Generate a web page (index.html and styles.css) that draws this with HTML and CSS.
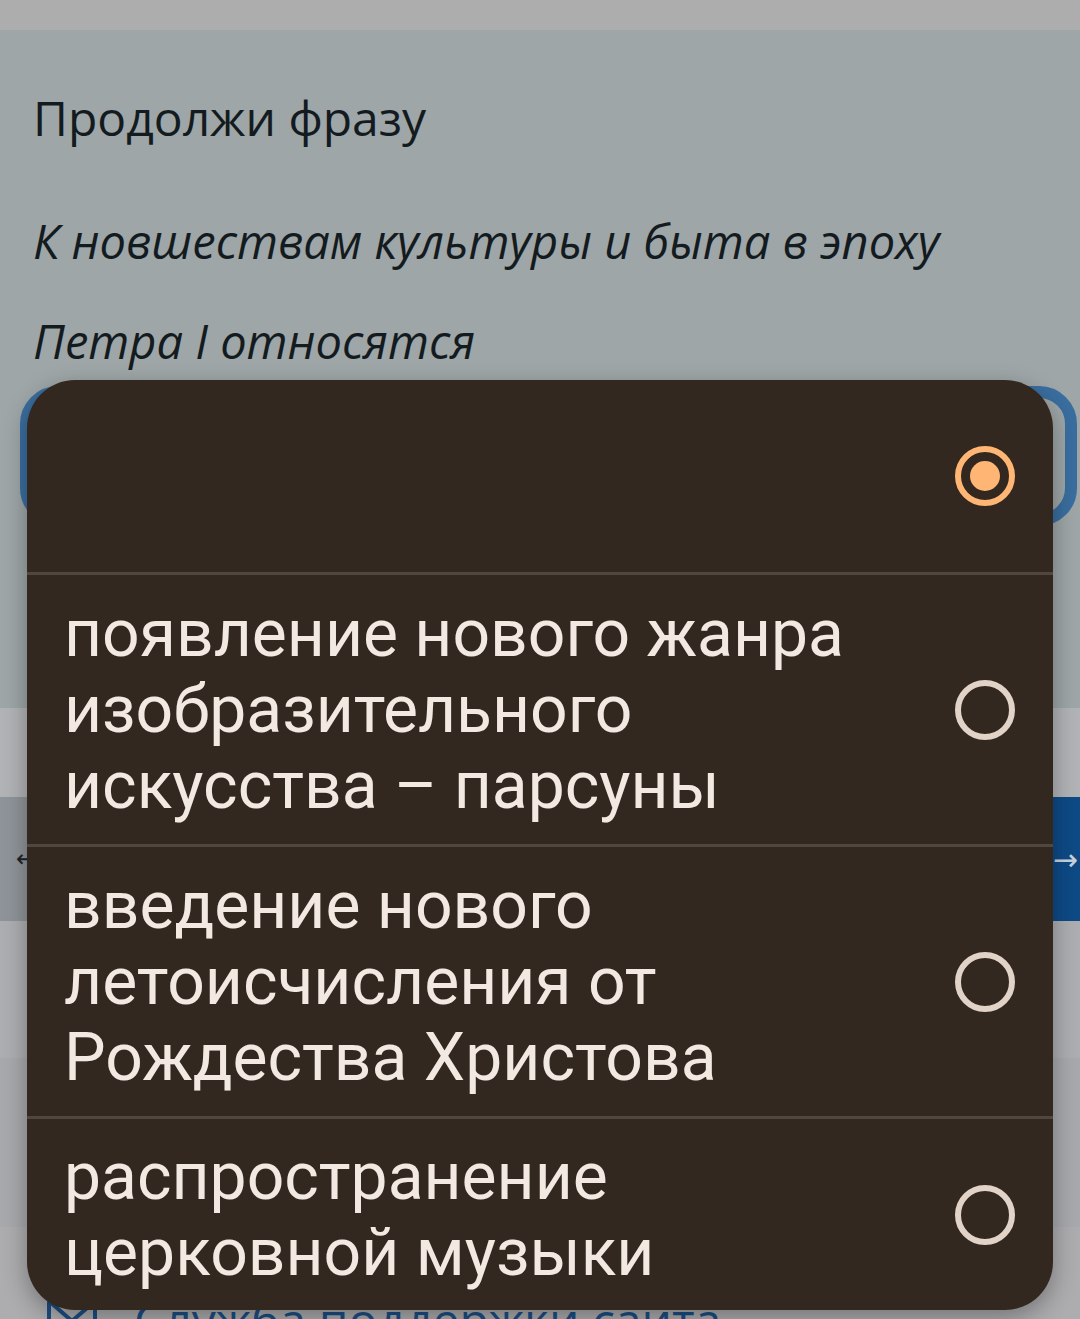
FILE: index.html
```html
<!DOCTYPE html>
<html lang="ru">
<head>
<meta charset="utf-8">
<link rel="stylesheet" href="styles.css">
</head>
<body>
<div class="screen">
  <div class="statusbar"></div>
  <section class="question">
    <p class="title">Продолжи фразу</p>
    <p class="prompt">К новшествам культуры и быта в эпоху<br>Петра I относятся</p>
    <div class="select"></div>
  </section>
  <div class="spacer-a"></div>
  <nav class="nav">
    <div class="nav-prev"><span class="arrow-left">←</span></div>
    <div class="nav-next"><span class="arrow-right">→</span></div>
  </nav>
  <div class="spacer-b"></div>
  <div class="spacer-c"></div>
  <footer class="footer">
    <svg class="mail" width="52" height="40" viewBox="0 0 52 40"><rect x="3" y="3" width="46" height="34" rx="3" fill="none" stroke="#1b4f86" stroke-width="4"/><path d="M4 5 L26 24 L48 5" fill="none" stroke="#1b4f86" stroke-width="4"/></svg>
    <span class="support">Служба поддержки сайта</span>
  </footer>

  <div class="popup">
    <div class="row row-first">
      <span class="opt-text"></span>
      <svg class="radio" width="62" height="62" viewBox="0 0 62 62"><circle cx="31" cy="31" r="27" fill="none" stroke="#ffb675" stroke-width="6"/><circle cx="31" cy="31" r="15" fill="#ffb675"/></svg>
    </div>
    <div class="sep"></div>
    <div class="row row-tall">
      <span class="opt-text">появление нового жанра изобразительного искусства – парсуны</span>
      <svg class="radio" width="62" height="62" viewBox="0 0 62 62"><circle cx="31" cy="31" r="27" fill="none" stroke="#e2d3c8" stroke-width="6"/></svg>
    </div>
    <div class="sep"></div>
    <div class="row row-tall">
      <span class="opt-text">введение нового летоисчисления от Рождества Христова</span>
      <svg class="radio" width="62" height="62" viewBox="0 0 62 62"><circle cx="31" cy="31" r="27" fill="none" stroke="#e2d3c8" stroke-width="6"/></svg>
    </div>
    <div class="sep"></div>
    <div class="row row-last">
      <span class="opt-text">распространение церковной музыки</span>
      <svg class="radio" width="62" height="62" viewBox="0 0 62 62"><circle cx="31" cy="31" r="27" fill="none" stroke="#e2d3c8" stroke-width="6"/></svg>
    </div>
  </div>
</div>
</body>
</html>
```

FILE: styles.css
```css
* { box-sizing: border-box; }
html, body { margin: 0; padding: 0; }
body { width: 1080px; height: 1319px; overflow: hidden; background: #adadaf; }

.screen { position: relative; width: 1080px; height: 1319px; overflow: hidden; }

.statusbar { height: 30px; background: #adadad; }

.question {
  height: 678px;
  background: #9ea6a8;
  padding: 57px 0 0 0;
  font-family: "Open Sans", "Noto Sans", sans-serif;
  color: #141b1f;
}
.title {
  margin: 0;
  padding-left: 33px;
  font-size: 48px;
  line-height: 62px;
}
.prompt {
  margin: 42px 0 0 0;
  padding-left: 33px;
  font-size: 47px;
  font-style: italic;
  line-height: 100px;
}
.select {
  margin: -5px 0 0 20px;
  width: 1057px;
  height: 140px;
  border: 12px solid #3a6e9f;
  border-radius: 38px;
}

.spacer-a { height: 89px; background: #b1b3b6; }

.nav { display: flex; height: 124px; }
.nav-prev { flex: 1; background: #8f949a; display: flex; align-items: center; padding-left: 16px; }
.nav-next { flex: 1; background: #0e4a86; display: flex; align-items: center; justify-content: flex-end; padding-right: 2px; }
.arrow-left { font-family: "DejaVu Sans", sans-serif; font-size: 24px; color: #1c2228; }
.arrow-right { font-family: "DejaVu Sans", sans-serif; font-size: 30px; color: #c9d3de; }

.spacer-b { height: 137px; background: #adaeb1; }
.spacer-c { height: 169px; background: #a8a9ac; }

.footer {
  height: 200px;
  background: #adadaf;
  display: flex;
  align-items: flex-start;
  gap: 36px;
  padding: 62px 0 0 46px;
}
.mail { flex: none; margin-top: 8px; }
.support {
  font-family: "Open Sans", "Noto Sans", sans-serif;
  font-size: 48px;
  line-height: 62px;
  color: #1b4f86;
}

.popup {
  position: absolute;
  left: 27px;
  top: 380px;
  width: 1026px;
  background: #32281f;
  border-radius: 48px;
  box-shadow: 0 8px 24px rgba(0, 0, 0, 0.32);
  overflow: hidden;
}
.row {
  display: flex;
  align-items: center;
  justify-content: space-between;
  padding: 0 38px 0 37px;
}
.row-first { height: 192px; }
.row-tall { height: 269px; }
.row-last { height: 191px; }
.sep { height: 3px; background: #51473f; }
.opt-text {
  font-family: Roboto, "Noto Sans", sans-serif;
  font-size: 66px;
  line-height: 76px;
  color: #f2e9e3;
  max-width: 860px;
}
.radio { flex: none; margin-right: -1px; }
```
